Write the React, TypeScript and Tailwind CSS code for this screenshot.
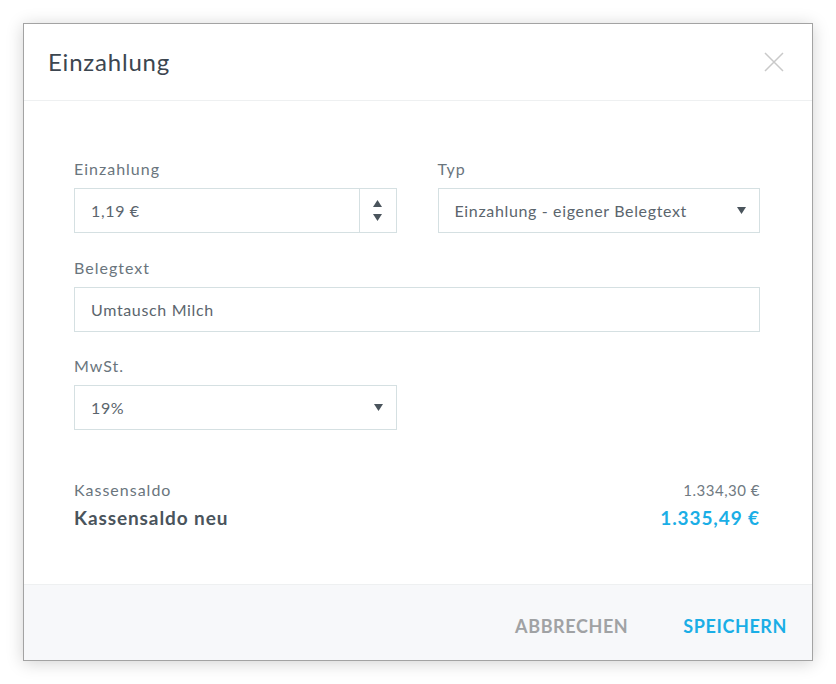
const font = { fontFamily: 'Lato, "Noto Sans", sans-serif' };

const Caret = () => (
  <svg width="9" height="7" viewBox="0 0 9 7" className="fill-[#4a545c]">
    <path d="M0 0h9L4.5 7z" />
  </svg>
);

const Field = ({ label, children }: { label: string; children: React.ReactNode }) => (
  <div className="flex flex-col">
    <label className="mb-[7px] text-[16px] leading-6 tracking-[1px] text-[#6a757d]">{label}</label>
    {children}
  </div>
);

const Select = ({ value }: { value: string }) => (
  <div className="flex h-[45px] items-center justify-between border border-[#d5e0e2] bg-white pl-4 pr-[13px] text-[16px] tracking-[0.65px] text-[#5b656d]">
    <span>{value}</span>
    <Caret />
  </div>
);

export default function App() {
  return (
    <div className="min-h-screen bg-white p-[23px]" style={font}>
      <div className="flex h-[638px] w-[790px] flex-col border border-[#a3a3a3] bg-white shadow-[0_2px_16px_rgba(0,0,0,0.18)]">
        <div className="flex h-[77px] shrink-0 items-center justify-between border-b border-[#eef0f1] pl-6 pr-[28px]">
          <h2 className="text-[24px] tracking-[0.8px] text-[#3c4650]">Einzahlung</h2>
          <svg width="20" height="20" viewBox="0 0 20 20" className="stroke-[#c9c9c9]" strokeWidth="1.5">
            <path d="M1 1l18 18M19 1L1 19" />
          </svg>
        </div>

        <div className="flex-1 pl-[50px] pr-[52px] pt-[56px]">
          <div className="grid grid-cols-2 gap-x-[41px]">
            <Field label="Einzahlung">
              <div className="flex h-[45px] border border-[#d5e0e2] text-[16px] tracking-[0.65px] text-[#5b656d]">
                <div className="flex flex-1 items-center pl-4">1,19 €</div>
                <div className="flex w-[37px] flex-col items-center justify-center gap-[7px] border-l border-[#d5e0e2]">
                  <svg width="9" height="7" viewBox="0 0 9 7" className="fill-[#4a545c]">
                    <path d="M4.5 0L9 7H0z" />
                  </svg>
                  <Caret />
                </div>
              </div>
            </Field>
            <Field label="Typ">
              <Select value="Einzahlung - eigener Belegtext" />
            </Field>
          </div>

          <div className="mt-[23px]">
            <Field label="Belegtext">
              <div className="flex h-[45px] items-center border border-[#d5e0e2] pl-4 text-[16px] tracking-[0.65px] text-[#5b656d]">
                Umtausch Milch
              </div>
            </Field>
          </div>

          <div className="mt-[22px] grid grid-cols-2 gap-x-[41px]">
            <Field label="MwSt.">
              <Select value="19%" />
            </Field>
          </div>

          <div className="mt-[48px] flex flex-col">
            <div className="flex items-center justify-between text-[16px] leading-6 tracking-[1px] text-[#6a757d]">
              <span>Kassensaldo</span>
              <span className="text-[15px] tracking-[0.5px] text-[#707a82]">1.334,30 €</span>
            </div>
            <div className="mt-[2px] flex items-center justify-between text-[19px] font-bold leading-[28px] tracking-[0.9px]">
              <span className="text-[#4a545c]">Kassensaldo neu</span>
              <span className="text-[#1aaee6]">1.335,49 €</span>
            </div>
          </div>
        </div>

        <div className="flex h-[76px] shrink-0 items-center justify-end gap-[55px] border-t border-[#eef0f1] bg-[#f7f8fa] pr-[25px] pt-2 text-[18px] font-bold tracking-[0.6px]">
          <button className="text-[#a0a2a4]">ABBRECHEN</button>
          <button className="text-[#1aaee6]">SPEICHERN</button>
        </div>
      </div>
    </div>
  );
}
